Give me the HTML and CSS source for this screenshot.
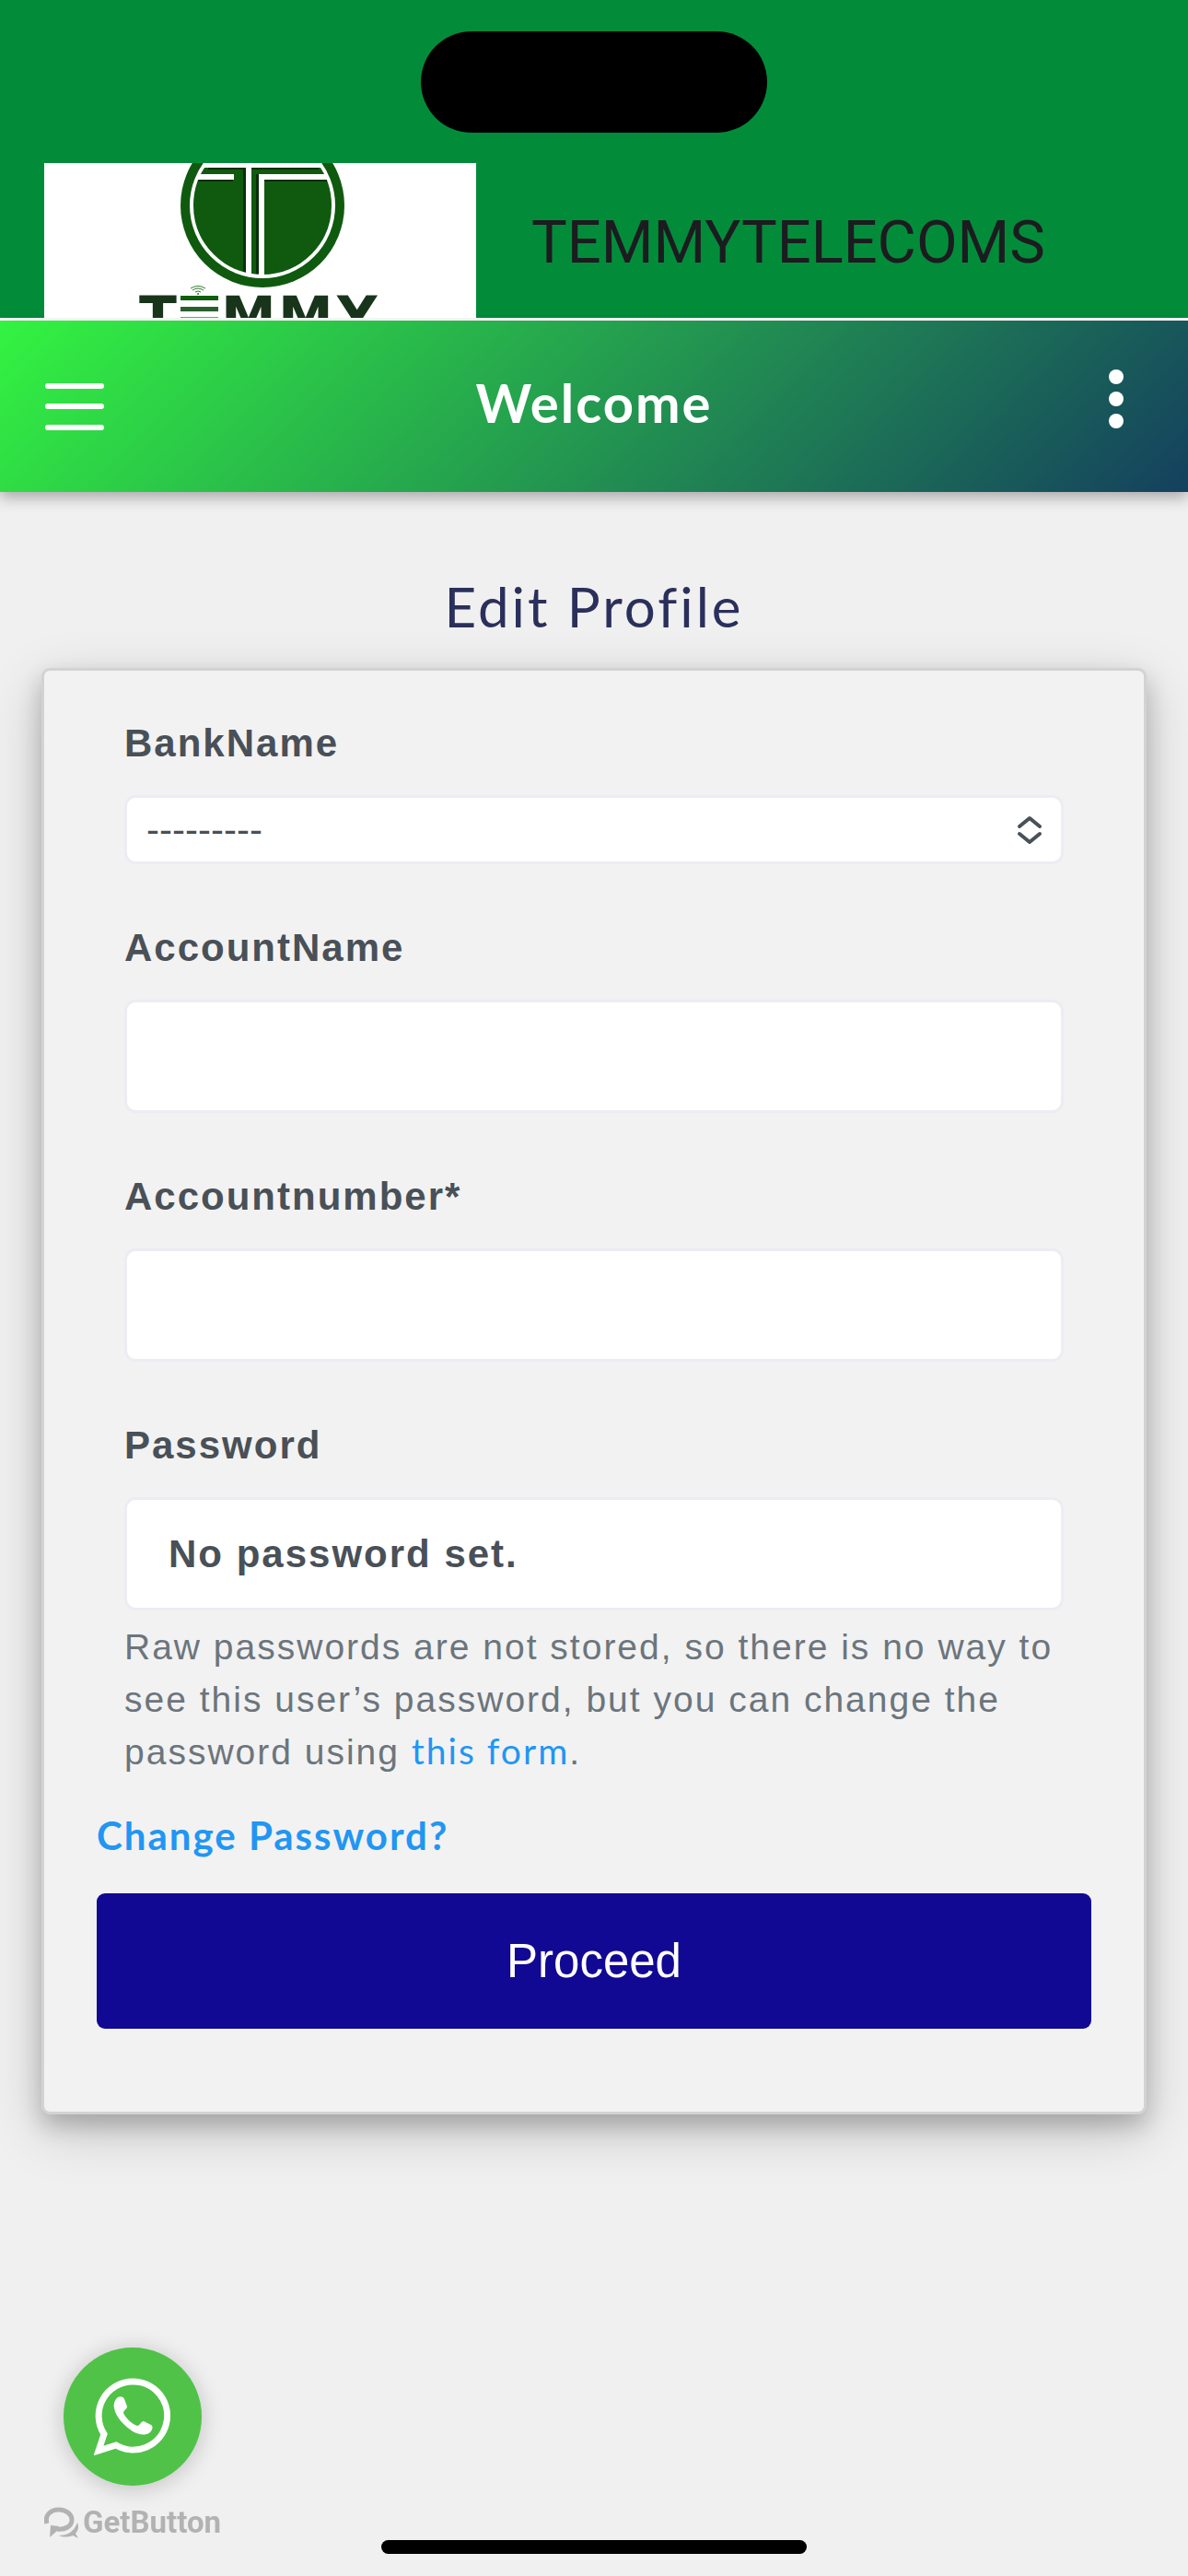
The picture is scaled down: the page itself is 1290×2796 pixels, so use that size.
FILE: index.html
```html
<!DOCTYPE html>
<html lang="en">
<head>
  <meta charset="UTF-8">
  <meta name="viewport" content="width=device-width, initial-scale=1.0">
  <title>TEMMYTELECOMS</title>
  <link rel="stylesheet" href="styles.css">
</head>
<body>
  <!-- Brand header -->
  <header class="top-header">
    <div class="island"></div>
    <div class="brand">
      <svg class="brand-logo" viewBox="0 0 469 168" role="img" aria-label="Temmy logo">
        <defs>
          <clipPath id="disc"><circle cx="237" cy="46" r="78"/></clipPath>
        </defs>
        <rect width="469" height="168" fill="#fff"/>
        <circle cx="237" cy="46" r="89" fill="#105a10"/>
        <g clip-path="url(#disc)">
          <rect x="150" y="-40" width="180" height="45" fill="#fff"/>
          <rect x="178" y="5" width="120" height="2" fill="#07300a"/>
          <rect x="216" y="6" width="3" height="120" fill="#07300a"/>
          <rect x="230" y="12" width="3" height="112" fill="#07300a"/>
          <rect x="165" y="18" width="40" height="2" fill="#07300a"/>
          <rect x="239" y="18" width="70" height="2" fill="#07300a"/>
          <rect x="160" y="12" width="46" height="6" fill="#fff"/>
          <rect x="219" y="4" width="6" height="121" fill="#fff"/>
          <rect x="233" y="12" width="6" height="113" fill="#fff"/>
          <rect x="233" y="12" width="80" height="6" fill="#fff"/>
        </g>
        <circle cx="237" cy="46" r="77" fill="none" stroke="#fff" stroke-width="4"/>
        <g fill="none" stroke="#2f7d2f" stroke-width="1">
          <path d="M159 136q8-5 16 0"/>
          <path d="M161 138q6-4 12 0"/>
          <path d="M164 140q3-2 6 0"/>
        </g>
        <circle cx="167" cy="142" r="1" fill="#2f7d2f"/>
        <g class="brand-letters">
          <text x="103" y="188">T</text>
          <text x="192" y="188">M</text>
          <text x="254" y="188">M</text>
          <text x="318" y="188">Y</text>
        </g>
        <rect x="148" y="144" width="41" height="5" fill="#0f5f0f"/>
        <rect x="148" y="156" width="41" height="5" fill="#2a602d"/>
        <rect x="148" y="167" width="41" height="1" fill="#7c9a7d"/>
      </svg>
      <span class="brand-name">TEMMYTELECOMS</span>
    </div>
  </header>

  <!-- Navigation bar -->
  <nav class="navbar">
    <button type="button" class="icon-btn" aria-label="Menu">
      <svg width="66" height="52" viewBox="0 0 66 52" stroke="#fff" stroke-width="6" stroke-linecap="round">
        <path d="M4 4h58M4 26h58M4 49h58"/>
      </svg>
    </button>
    <h1>Welcome</h1>
    <button type="button" class="icon-btn more" aria-label="More">
      <svg width="16" height="64" viewBox="0 0 16 64" fill="#fff">
        <circle cx="8" cy="8" r="8"/>
        <circle cx="8" cy="32" r="8"/>
        <circle cx="8" cy="56" r="8"/>
      </svg>
    </button>
  </nav>

  <main>
    <h2>Edit Profile</h2>

    <form class="card">
      <div class="form-group">
        <label for="bank">BankName</label>
        <div class="select-wrap">
          <select id="bank">
            <option>---------</option>
          </select>
          <svg class="select-arrow" width="28" height="32" viewBox="0 0 28 32" fill="none" stroke="#495057" stroke-width="4" stroke-linecap="round" stroke-linejoin="round">
            <path d="M3 12L14 3l11 9M3 20l11 9 11-9"/>
          </svg>
        </div>
      </div>
      <div class="form-group">
        <label for="account-name">AccountName</label>
        <input type="text" id="account-name">
      </div>
      <div class="form-group">
        <label for="account-number">Accountnumber*</label>
        <input type="text" id="account-number">
      </div>
      <div class="form-group">
        <label for="password">Password</label>
        <input type="text" id="password" value="No password set." readonly>
        <p class="help-text">Raw passwords are not stored, so there is no way to see this user’s password, but you can change the password using <a href="#">this form</a>.</p>
      </div>
      <a class="change-link" href="#">Change Password?</a>
      <button type="submit" class="proceed-btn">Proceed</button>
    </form>
  </main>

  <!-- Chat widget -->
  <div class="chat-widget">
    <a class="chat-btn" href="#" aria-label="WhatsApp">
      <svg width="84" height="84" viewBox="0 0 84 84">
        <path d="M42 4a37 37 0 0 0-31 57L5 79l19-6A37 37 0 1 0 42 4z" fill="none" stroke="#fff" stroke-width="7"/>
        <path d="M24 23c3-4 8-3 9 0l3 8c0 3-4 4-4 7 2 5 9 12 15 14 3 0 4-5 7-5l8 4c3 2 1 6-1 8-5 4-12 3-19-1C33 52 24 43 22 33c-1-4 0-7 2-10z" fill="#fff"/>
      </svg>
    </a>
    <a class="getbutton" href="#">
      <svg width="38" height="34" viewBox="0 0 38 34" fill="none" stroke="#b2b2b2">
        <path d="M3 18C0 9 7 3 16 3c8 0 14 5 14 11 0 7-7 11-16 10" stroke-width="5"/>
        <path d="M7 20l9 1-2 5-8 7zM16 31c10 0 16-4 20-14 2 5 1 8-2 12l3 5-6-3c-5 2-11 2-15 0z" fill="#b2b2b2" stroke="none"/>
      </svg>
      <span>GetButton</span>
    </a>
  </div>
  <div class="home-indicator"></div>
</body>
</html>
```

FILE: styles.css
```css
* {
  box-sizing: border-box;
}
body {
  margin: 0;
  min-height: 100vh;
  background: #f0f0f0;
  font-family: Lato, sans-serif;
  letter-spacing: 2px;
}
button {
  border: none;
  cursor: pointer;
}
a {
  color: #2196f3;
  text-decoration: none;
}

/* Header */
.top-header {
  background: #028c3a;
  padding-top: 34px;
  border-bottom: 3px solid #fff;
}
.island {
  width: 376px;
  height: 110px;
  margin: 0 auto 33px;
  border-radius: 55px;
  background: #000;
}
.brand {
  display: flex;
  align-items: center;
  gap: 60px;
  padding: 0 48px;
}
.brand-logo {
  width: 469px;
  height: 168px;
}
.brand-letters {
  font-family: "DejaVu Sans", sans-serif;
  font-size: 60px;
  font-weight: bold;
  fill: #18351b;
}
.brand-name {
  padding-top: 3px;
  font-family: Roboto, sans-serif;
  font-size: 65px;
  letter-spacing: normal;
  color: #1c1b20;
}

/* Navbar */
.navbar {
  display: flex;
  align-items: center;
  justify-content: space-between;
  height: 186px;
  padding: 0 48px;
  background: linear-gradient(135deg, #33f341, #14405e);
  box-shadow: 0 6px 15px rgba(0, 0, 0, 0.3);
}
.navbar h1 {
  margin: 0;
  padding-bottom: 9px;
  font-size: 58px;
  font-weight: bold;
  color: #fff;
}
.icon-btn {
  display: flex;
  width: 96px;
  padding: 0;
  background: none;
}
.more {
  justify-content: flex-end;
  padding: 0 22px 16px 0;
}

/* Form */
main {
  padding: 82px 45px;
}
h2 {
  margin: 0 0 25px;
  font-size: 60px;
  line-height: 84px;
  font-weight: normal;
  letter-spacing: 3px;
  text-align: center;
  color: #2b2f5b;
}
.card {
  display: flex;
  flex-direction: column;
  padding: 48px 57px 90px;
  border: 3px solid #d3d3d3;
  border-radius: 9px;
  background: #f2f2f2;
  box-shadow: 0 12px 24px rgba(0, 0, 0, 0.2), 0 18px 60px rgba(0, 0, 0, 0.19);
  font-size: 42px;
  line-height: 61px;
}
.form-group {
  display: flex;
  flex-direction: column;
  margin: 0 30px 60px;
  font-family: "Liberation Sans", Arial, sans-serif;
}
.form-group:last-of-type {
  margin-bottom: 32px;
}
label {
  margin-bottom: 26px;
  font-weight: bold;
  color: #495057;
}
input,
select {
  width: 100%;
  height: 123px;
  padding: 0 45px;
  border: 3px solid #ecedf3;
  border-radius: 12px;
  background: #fff;
  color: #495057;
  font: bold 42px "Liberation Sans", Arial, sans-serif;
  letter-spacing: 2px;
}
select {
  display: block;
  height: 75px;
  padding: 0 21px;
  appearance: none;
  font-weight: normal;
  letter-spacing: normal;
}
.select-wrap {
  position: relative;
}
.select-arrow {
  position: absolute;
  right: 23px;
  top: 22px;
}
.help-text {
  margin: 11px 0 0;
  font-size: 39px;
  line-height: 57px;
  color: #6c757d;
}
.help-text a {
  font-family: Lato, sans-serif;
  line-height: 1;
}
.change-link {
  align-self: flex-start;
  margin-bottom: 32px;
  font-weight: bold;
}
.proceed-btn {
  height: 147px;
  border-radius: 9px;
  background: #110993;
  color: #fff;
  font-family: "Liberation Sans", Arial, sans-serif;
  font-size: 51px;
}

/* Chat widget */
.chat-widget {
  position: fixed;
  left: 48px;
  bottom: 39px;
  display: flex;
  flex-direction: column;
  align-items: center;
  gap: 20px;
}
.chat-btn {
  display: flex;
  align-items: center;
  justify-content: center;
  width: 150px;
  height: 150px;
  border-radius: 50%;
  background: #50c248;
  box-shadow: 0 3px 24px rgba(0, 0, 0, 0.2);
}
.getbutton {
  display: flex;
  align-items: center;
  gap: 4px;
  color: #b2b2b2;
  font-family: Roboto, sans-serif;
  font-size: 33px;
  line-height: 39px;
  font-weight: bold;
  letter-spacing: normal;
}
.home-indicator {
  position: fixed;
  left: 50%;
  bottom: 24px;
  width: 462px;
  height: 15px;
  margin-left: -231px;
  border-radius: 8px;
  background: #000;
}
```
